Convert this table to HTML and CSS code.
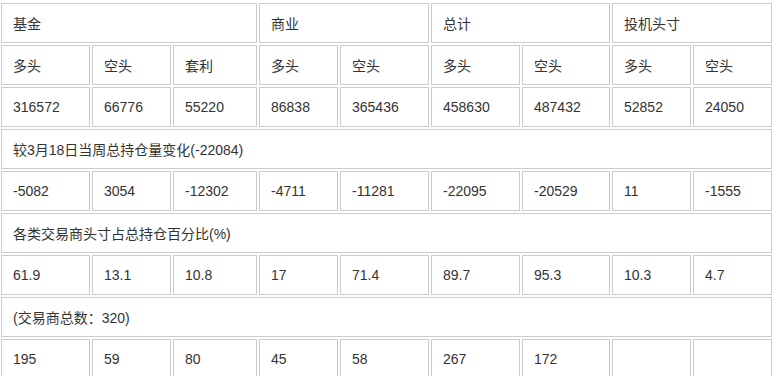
FILE: index.html
```html
<!DOCTYPE html>
<html lang="zh-CN">
<head>
<meta charset="utf-8">
<title>持仓报告</title>
<link rel="stylesheet" href="styles.css">
</head>
<body>
<div class="grid">
  <div class="cell span3">基金</div>
  <div class="cell span2">商业</div>
  <div class="cell span2">总计</div>
  <div class="cell span2">投机头寸</div>

  <div class="cell">多头</div><div class="cell">空头</div><div class="cell">套利</div>
  <div class="cell">多头</div><div class="cell">空头</div>
  <div class="cell">多头</div><div class="cell">空头</div>
  <div class="cell">多头</div><div class="cell">空头</div>

  <div class="cell">316572</div><div class="cell">66776</div><div class="cell">55220</div>
  <div class="cell">86838</div><div class="cell">365436</div>
  <div class="cell">458630</div><div class="cell">487432</div>
  <div class="cell">52852</div><div class="cell">24050</div>

  <div class="cell full">较3月18日当周总持仓量变化(-22084)</div>

  <div class="cell">-5082</div><div class="cell">3054</div><div class="cell">-12302</div>
  <div class="cell">-4711</div><div class="cell">-11281</div>
  <div class="cell">-22095</div><div class="cell">-20529</div>
  <div class="cell">11</div><div class="cell">-1555</div>

  <div class="cell full">各类交易商头寸占总持仓百分比(%)</div>

  <div class="cell">61.9</div><div class="cell">13.1</div><div class="cell">10.8</div>
  <div class="cell">17</div><div class="cell">71.4</div>
  <div class="cell">89.7</div><div class="cell">95.3</div>
  <div class="cell">10.3</div><div class="cell">4.7</div>

  <div class="cell full">(交易商总数：320)</div>

  <div class="cell">195</div><div class="cell">59</div><div class="cell">80</div>
  <div class="cell">45</div><div class="cell">58</div>
  <div class="cell">267</div><div class="cell">172</div>
  <div class="cell"></div><div class="cell"></div>
</div>
</body>
</html>
```

FILE: styles.css
```css
html, body {
  margin: 0;
  padding: 0;
  background: #ffffff;
}

body {
  font-family: "Liberation Sans", Arial, "Noto Sans CJK SC", sans-serif;
  font-size: 14px;
  color: #333333;
}

.grid {
  display: grid;
  grid-template-columns: 89px 79px 84px 79px 89px 89px 88px 79px 79px;
  grid-auto-rows: 40px;
  gap: 2px;
  margin: 3px 0 0 1px;
}

.cell {
  border: 1px solid #cccccc;
  padding: 0 11px;
  display: flex;
  align-items: center;
  white-space: nowrap;
}

.span2 { grid-column: span 2; }
.span3 { grid-column: span 3; }
.full { grid-column: 1 / -1; }
```
